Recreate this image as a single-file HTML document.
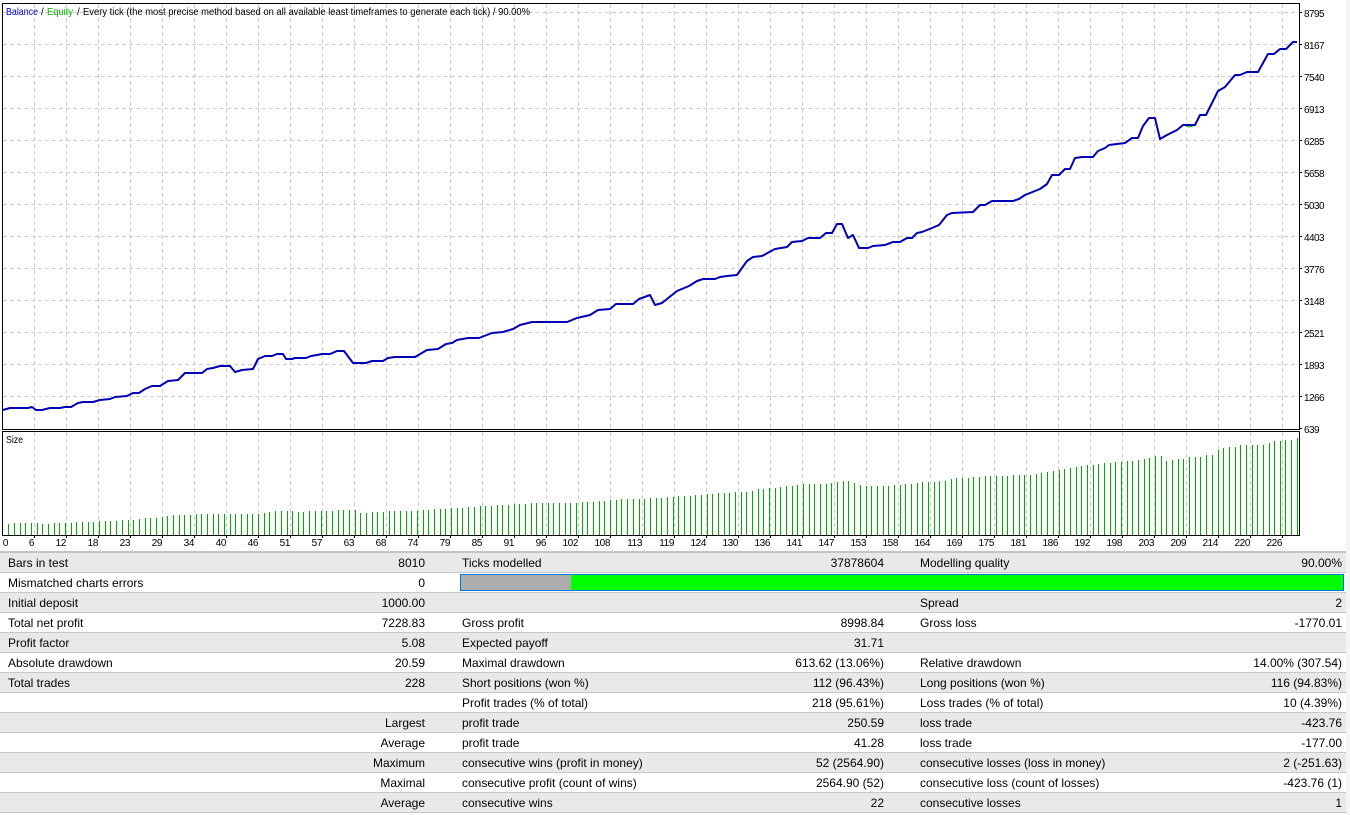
<!DOCTYPE html>
<html>
<head>
<meta charset="utf-8">
<title>Strategy Tester Report</title>
<style>
html,body{margin:0;padding:0;width:1350px;height:815px;overflow:hidden;background:#fff}
body{position:relative;font-family:"Liberation Sans",sans-serif;color:#000}
svg{position:absolute;left:0;top:0}
svg text{font-family:"Liberation Sans",sans-serif;font-size:10px;fill:#000}
.strip{position:absolute;left:1346px;top:0;width:4px;height:815px;background:#f5f5f5}
.top{position:absolute;left:0;top:551px;width:1346px;height:2px;background:#c4c4c4}
.r{position:absolute;left:0;width:1346px;height:19px;border-bottom:1px solid #c8c8c8;font-size:12px;line-height:19px;background:#fff}
.g{background:#e9e9e9}
.r span{position:absolute;top:1px;white-space:nowrap}
.a{left:8px}
.b{right:921px}
.c{left:462px}
.d{right:462px}
.e{left:920px}
.f{right:4px}
.bar{position:absolute;left:460px;top:574px;width:882px;height:15px;border:1px solid #0078d7;background:#00ff00}
.bar i{display:block;width:110px;height:15px;background:#adadad}
</style>
</head>
<body>
<svg width="1350" height="551" viewBox="0 0 1350 551">
<g stroke="#cccccc" stroke-width="1" stroke-dasharray="4 3" fill="none" shape-rendering="crispEdges">
<path d="M3 12.5H1299M3 44.5H1299M3 76.5H1299M3 108.5H1299M3 140.5H1299M3 172.5H1299M3 204.5H1299M3 236.5H1299M3 268.5H1299M3 300.5H1299M3 332.5H1299M3 364.5H1299M3 396.5H1299"/>
<path d="M34.5 4V429M66.5 4V429M98.5 4V429M130.5 4V429M162.5 4V429M194.5 4V429M226.5 4V429M258.5 4V429M290.5 4V429M322.5 4V429M354.5 4V429M386.5 4V429M418.5 4V429M450.5 4V429M482.5 4V429M514.5 4V429M546.5 4V429M578.5 4V429M610.5 4V429M642.5 4V429M674.5 4V429M706.5 4V429M738.5 4V429M770.5 4V429M802.5 4V429M834.5 4V429M866.5 4V429M898.5 4V429M930.5 4V429M962.5 4V429M994.5 4V429M1026.5 4V429M1058.5 4V429M1090.5 4V429M1122.5 4V429M1154.5 4V429M1186.5 4V429M1218.5 4V429M1250.5 4V429M1282.5 4V429"/>
<path d="M34.5 432V535M66.5 432V535M98.5 432V535M130.5 432V535M162.5 432V535M194.5 432V535M226.5 432V535M258.5 432V535M290.5 432V535M322.5 432V535M354.5 432V535M386.5 432V535M418.5 432V535M450.5 432V535M482.5 432V535M514.5 432V535M546.5 432V535M578.5 432V535M610.5 432V535M642.5 432V535M674.5 432V535M706.5 432V535M738.5 432V535M770.5 432V535M802.5 432V535M834.5 432V535M866.5 432V535M898.5 432V535M930.5 432V535M962.5 432V535M994.5 432V535M1026.5 432V535M1058.5 432V535M1090.5 432V535M1122.5 432V535M1154.5 432V535M1186.5 432V535M1218.5 432V535M1250.5 432V535M1282.5 432V535"/>
</g>
<path transform="translate(.5 0)" shape-rendering="crispEdges" fill="none" stroke="#00aa00" stroke-width="1" d="M8 524V535M14 523V535M20 523V535M25 523V535M31 523V535M37 523V535M42 524V535M48 524V535M54 523V535M59 523V535M65 523V535M71 523V535M76 522V535M82 522V535M88 522V535M93 522V535M99 521V535M105 521V535M110 521V535M116 521V535M122 520V535M128 520V535M133 520V535M139 519V535M145 518V535M150 518V535M156 518V535M162 517V535M167 516V535M173 515V535M179 515V535M184 515V535M190 515V535M196 514V535M201 514V535M207 514V535M213 514V535M218 514V535M224 514V535M230 514V535M235 514V535M241 514V535M247 514V535M252 514V535M258 514V535M264 513V535M269 512V535M275 511V535M281 511V535M287 511V535M292 511V535M298 512V535M303 512V535M309 511V535M315 511V535M321 511V535M326 511V535M332 511V535M338 510V535M343 510V535M349 510V535M355 510V535M360 513V535M366 513V535M372 512V535M377 512V535M383 512V535M389 511V535M394 511V535M400 511V535M406 511V535M411 511V535M417 511V535M423 510V535M428 510V535M434 509V535M440 509V535M445 509V535M451 508V535M457 508V535M462 508V535M468 507V535M474 507V535M480 506V535M485 506V535M491 506V535M497 505V535M502 505V535M508 505V535M514 504V535M519 504V535M525 504V535M531 503V535M536 503V535M542 503V535M548 503V535M553 503V535M559 503V535M565 503V535M570 503V535M576 503V535M582 502V535M587 502V535M593 502V535M599 501V535M604 501V535M610 500V535M616 500V535M621 499V535M627 499V535M633 499V535M639 499V535M644 499V535M650 498V535M656 498V535M661 498V535M667 497V535M673 497V535M678 496V535M684 496V535M690 496V535M695 495V535M701 495V535M707 494V535M712 494V535M718 493V535M724 493V535M729 493V535M735 492V535M741 492V535M746 492V535M752 491V535M758 489V535M763 489V535M769 488V535M775 488V535M780 487V535M786 486V535M792 486V535M797 485V535M803 484V535M809 484V535M814 484V535M820 484V535M826 484V535M831 483V535M837 482V535M843 481V535M848 481V535M854 483V535M860 485V535M866 486V535M871 486V535M877 486V535M883 486V535M888 486V535M894 485V535M900 485V535M905 484V535M911 484V535M917 483V535M922 482V535M928 482V535M934 482V535M939 481V535M945 481V535M951 479V535M956 478V535M962 478V535M968 478V535M973 477V535M979 477V535M985 476V535M990 476V535M996 476V535M1002 476V535M1007 476V535M1013 475V535M1019 475V535M1024 475V535M1030 475V535M1036 474V535M1041 473V535M1047 472V535M1053 471V535M1059 470V535M1064 469V535M1070 468V535M1076 467V535M1081 466V535M1087 465V535M1093 465V535M1098 464V535M1104 463V535M1110 463V535M1115 462V535M1121 462V535M1127 461V535M1132 461V535M1138 460V535M1144 459V535M1149 458V535M1155 456V535M1161 456V535M1166 461V535M1172 460V535M1178 459V535M1183 459V535M1189 457V535M1195 457V535M1200 457V535M1206 455V535M1212 455V535M1218 450V535M1223 448V535M1229 447V535M1235 447V535M1240 445V535M1246 445V535M1252 445V535M1257 445V535M1263 445V535M1269 443V535M1274 441V535M1280 441V535M1285 440V535M1291 440V535M1297 438V535"/>
<path d="M1186 126L1189 127L1193 126" fill="none" stroke="#00aa00" stroke-width="1"/>
<polyline fill="none" stroke="#0000b4" stroke-width="2" stroke-linejoin="round" points="3,410 10,408 28,408 32,407 36,410 42,410 50,408 60,408 65,407 71,407 78,403 83,402 93,402 100,400 110,399 115,397 127,396 133,393 139,393 145,389 152,386 160,386 168,381 178,380 185,373 202,373 207,369 213,368 220,366 230,366 235,372 242,370 253,369 258,359 265,356 272,356 277,354 283,354 286,359 292,359 295,358 306,358 311,356 317,355 322,354 330,354 337,351 344,351 353,363 366,363 372,361 383,361 388,358 395,357 415,357 427,350 438,349 446,344 452,343 457,340 468,338 479,338 492,333 503,332 513,329 520,325 532,322 567,322 577,318 590,315 598,310 610,309 616,304 633,304 639,299 650,295 655,305 662,303 677,291 689,286 697,281 703,279 715,279 720,277 727,276 737,275 747,261 753,257 762,256 775,249 787,247 792,242 802,241 808,238 820,238 826,233 832,233 837,224 842,224 848,238 853,235 859,248 868,248 873,246 885,245 893,242 900,242 907,238 912,238 917,233 922,232 932,228 939,225 947,215 952,213 973,212 980,205 985,205 992,201 1013,201 1019,199 1025,195 1040,189 1047,184 1052,175 1059,175 1065,169 1070,169 1075,158 1082,157 1093,157 1098,151 1105,148 1109,145 1117,144 1125,143 1132,138 1138,138 1143,126 1149,118 1155,118 1160,139 1167,135 1177,130 1183,125 1195,125 1200,115 1206,115 1218,91 1225,87 1235,75 1240,75 1247,72 1258,72 1268,54 1274,54 1280,49 1286,49 1293,42 1297,42"/>
<g fill="none" stroke="#000" stroke-width="1" shape-rendering="crispEdges">
<path d="M2.5 3.5H1299.5V429.5H2.5Z"/>
<path d="M2.5 431.5H1299.5V535.5H2.5Z"/>
<path d="M1299 12.5H1302M1299 44.5H1302M1299 76.5H1302M1299 108.5H1302M1299 140.5H1302M1299 172.5H1302M1299 204.5H1302M1299 236.5H1302M1299 268.5H1302M1299 300.5H1302M1299 332.5H1302M1299 364.5H1302M1299 396.5H1302M1299 428.5H1302"/>
<path d="M34.5 535V538M66.5 535V538M98.5 535V538M130.5 535V538M162.5 535V538M194.5 535V538M226.5 535V538M258.5 535V538M290.5 535V538M322.5 535V538M354.5 535V538M386.5 535V538M418.5 535V538M450.5 535V538M482.5 535V538M514.5 535V538M546.5 535V538M578.5 535V538M610.5 535V538M642.5 535V538M674.5 535V538M706.5 535V538M738.5 535V538M770.5 535V538M802.5 535V538M834.5 535V538M866.5 535V538M898.5 535V538M930.5 535V538M962.5 535V538M994.5 535V538M1026.5 535V538M1058.5 535V538M1090.5 535V538M1122.5 535V538M1154.5 535V538M1186.5 535V538M1218.5 535V538M1250.5 535V538M1282.5 535V538"/>
</g>
<text x="6" y="15" textLength="32" lengthAdjust="spacingAndGlyphs" style="fill:#0000c8">Balance</text>
<text x="41" y="15">/</text>
<text x="47" y="15" textLength="26" lengthAdjust="spacingAndGlyphs" style="fill:#00b400">Equity</text>
<text x="77" y="15">/</text>
<text x="83" y="15" textLength="447" lengthAdjust="spacingAndGlyphs">Every tick (the most precise method based on all available least timeframes to generate each tick) / 90.00%</text>
<text x="6" y="443" textLength="17" lengthAdjust="spacingAndGlyphs">Size</text>
<g letter-spacing="-.55">
<text x="1304" y="17">8795</text><text x="1304" y="49">8167</text><text x="1304" y="81">7540</text><text x="1304" y="113">6913</text><text x="1304" y="145">6285</text><text x="1304" y="177">5658</text><text x="1304" y="209">5030</text><text x="1304" y="241">4403</text><text x="1304" y="273">3776</text><text x="1304" y="305">3148</text><text x="1304" y="337">2521</text><text x="1304" y="369">1893</text><text x="1304" y="401">1266</text><text x="1304" y="433">639</text>
</g>
<g text-anchor="end" letter-spacing="-.4">
<text x="8" y="546">0</text><text x="34" y="546">6</text><text x="66" y="546">12</text><text x="98" y="546">18</text><text x="130" y="546">23</text><text x="162" y="546">29</text><text x="194" y="546">34</text><text x="226" y="546">40</text><text x="258" y="546">46</text><text x="290" y="546">51</text><text x="322" y="546">57</text><text x="354" y="546">63</text><text x="386" y="546">68</text><text x="418" y="546">74</text><text x="450" y="546">79</text><text x="482" y="546">85</text><text x="514" y="546">91</text><text x="546" y="546">96</text><text x="578" y="546">102</text><text x="610" y="546">108</text><text x="642" y="546">113</text><text x="674" y="546">119</text><text x="706" y="546">124</text><text x="738" y="546">130</text><text x="770" y="546">136</text><text x="802" y="546">141</text><text x="834" y="546">147</text><text x="866" y="546">153</text><text x="898" y="546">158</text><text x="930" y="546">164</text><text x="962" y="546">169</text><text x="994" y="546">175</text><text x="1026" y="546">181</text><text x="1058" y="546">186</text><text x="1090" y="546">192</text><text x="1122" y="546">198</text><text x="1154" y="546">203</text><text x="1186" y="546">209</text><text x="1218" y="546">214</text><text x="1250" y="546">220</text><text x="1282" y="546">226</text>
</g>
</svg>
<div class="strip"></div>
<div class="top"></div>
<div class="r g" style="top:553px"><span class="a">Bars in test</span><span class="b">8010</span><span class="c">Ticks modelled</span><span class="d">37878604</span><span class="e">Modelling quality</span><span class="f">90.00%</span></div>
<div class="r" style="top:573px"><span class="a">Mismatched charts errors</span><span class="b">0</span></div>
<div class="bar"><i></i></div>
<div class="r g" style="top:593px"><span class="a">Initial deposit</span><span class="b">1000.00</span><span class="e">Spread</span><span class="f">2</span></div>
<div class="r" style="top:613px"><span class="a">Total net profit</span><span class="b">7228.83</span><span class="c">Gross profit</span><span class="d">8998.84</span><span class="e">Gross loss</span><span class="f">-1770.01</span></div>
<div class="r g" style="top:633px"><span class="a">Profit factor</span><span class="b">5.08</span><span class="c">Expected payoff</span><span class="d">31.71</span></div>
<div class="r" style="top:653px"><span class="a">Absolute drawdown</span><span class="b">20.59</span><span class="c">Maximal drawdown</span><span class="d">613.62 (13.06%)</span><span class="e">Relative drawdown</span><span class="f">14.00% (307.54)</span></div>
<div class="r g" style="top:673px"><span class="a">Total trades</span><span class="b">228</span><span class="c">Short positions (won %)</span><span class="d">112 (96.43%)</span><span class="e">Long positions (won %)</span><span class="f">116 (94.83%)</span></div>
<div class="r" style="top:693px"><span class="c">Profit trades (% of total)</span><span class="d">218 (95.61%)</span><span class="e">Loss trades (% of total)</span><span class="f">10 (4.39%)</span></div>
<div class="r g" style="top:713px"><span class="b">Largest</span><span class="c">profit trade</span><span class="d">250.59</span><span class="e">loss trade</span><span class="f">-423.76</span></div>
<div class="r" style="top:733px"><span class="b">Average</span><span class="c">profit trade</span><span class="d">41.28</span><span class="e">loss trade</span><span class="f">-177.00</span></div>
<div class="r g" style="top:753px"><span class="b">Maximum</span><span class="c">consecutive wins (profit in money)</span><span class="d">52 (2564.90)</span><span class="e">consecutive losses (loss in money)</span><span class="f">2 (-251.63)</span></div>
<div class="r" style="top:773px"><span class="b">Maximal</span><span class="c">consecutive profit (count of wins)</span><span class="d">2564.90 (52)</span><span class="e">consecutive loss (count of losses)</span><span class="f">-423.76 (1)</span></div>
<div class="r g" style="top:793px"><span class="b">Average</span><span class="c">consecutive wins</span><span class="d">22</span><span class="e">consecutive losses</span><span class="f">1</span></div>
</body>
</html>
